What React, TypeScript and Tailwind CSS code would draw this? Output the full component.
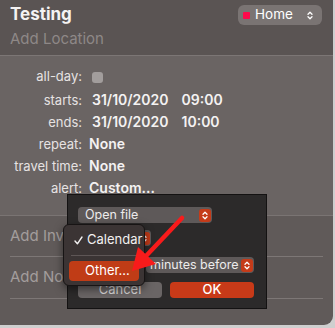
import React from "react";

const ROWS: { label: string; value: React.ReactNode }[] = [
  { label: "starts:", value: <span className="ml-[3px]">31/10/2020<span className="ml-[13px]">09:00</span></span> },
  { label: "ends:", value: <span className="ml-[3px]">31/10/2020<span className="ml-[13px]">10:00</span></span> },
  { label: "repeat:", value: "None" },
  { label: "travel time:", value: "None" },
  { label: "alert:", value: "Custom..." },
];

function Stepper({ red = false }: { red?: boolean }) {
  return (
    <span
      className={`flex h-[13px] w-[12px] items-center justify-center rounded-[3px] ${red ? "bg-[#c53b19]" : ""}`}
    >
      <svg width="6" height="9" viewBox="0 0 6 9" fill="none" stroke="white" strokeWidth="1.3" strokeLinecap="round" strokeLinejoin="round">
        <path d="M1 3.2 L3 1.2 L5 3.2" />
        <path d="M1 5.8 L3 7.8 L5 5.8" />
      </svg>
    </span>
  );
}

export default function App() {
  return (
    <div
      className="h-[328px] w-[335px] overflow-hidden bg-[#cfcfcf]"
      style={{ fontFamily: "Inter, 'Liberation Sans', sans-serif" }}
    >
      <div className="relative h-[325px] w-[333px] overflow-hidden rounded-br-[9px] bg-[#605a59]">
        {/* header */}
        <div className="h-[56px] border-b border-[#7c7675] bg-[#5a5453] pl-[10px] pr-[11px] pt-[3px]">
          <div className="flex items-start justify-between">
            <h1 className="text-[17px] font-bold leading-[22px] text-[#f4f2f2]">Testing</h1>
            <div className="mt-[2px] flex h-[20px] w-[84px] items-center rounded-[6px] bg-[#7a7473] pl-[5px] pr-[6px]">
              <span className="h-[7px] w-[7px] rounded-[1px] bg-[#ff0a4c]" />
              <span className="ml-[5px] text-[13.5px] leading-none text-white">Home</span>
              <span className="ml-auto">
                <Stepper />
              </span>
            </div>
          </div>
          <p className="mt-[5px] text-[15px] leading-[18px] text-[#8e8887]">Add Location</p>
        </div>

        {/* details */}
        <div className="h-[160px] border-b border-[#7a7473] bg-[#6a6463] pt-[10px] text-[#f4f2f2]">
          <div className="flex h-[22px] items-center">
            <span className="w-[82px] shrink-0 text-right text-[13px] text-[#e6e2e2]">all-day:</span>
            <span className="ml-[10px] h-[11px] w-[11px] rounded-[3px] bg-[#a29d9c]" />
          </div>
          {ROWS.map((r) => (
            <div key={r.label} className="h-[22px] whitespace-nowrap leading-[22px]">
              <span className="inline-block w-[82px] text-right text-[13px] text-[#e6e2e2]">{r.label}</span>
              <span className="ml-[7px] inline-block text-[14px] font-semibold">{r.value}</span>
            </div>
          ))}
        </div>

        {/* invitees / notes */}
        <div className="pl-[10px] pr-[10px]">
          <div className="flex h-[41px] items-center border-b border-[#7d7776] text-[15px] text-[#a39d9c]">Add Invitees</div>
          <div className="flex h-[42px] items-center border-b border-[#7d7776] text-[15px] text-[#a39d9c]">Add Notes</div>
        </div>

        {/* alert dialog */}
        <div className="absolute left-[67px] top-[194px] flex h-[115px] w-[200px] flex-col gap-[8px] border border-[#141212] bg-[#2c2a2a] pl-[10px] pr-[12px] pt-[12px] text-[12.5px] text-[#ecebeb]">
          <div className="flex h-[16px] w-[134px] items-center rounded-[4px] bg-[#5e5959] pl-[7px] pr-[1px]">
            <span>Open file</span>
            <span className="ml-auto"><Stepper red /></span>
          </div>
          <div className="mt-[-1px] flex h-[16px] w-[73px] items-center justify-end rounded-[4px] bg-[#5e5959] pr-[1px]">
            <Stepper red />
          </div>
          <div className="mt-[3px] flex h-[16px] items-center gap-[6px]">
            <span className="h-[16px] w-[62px] shrink-0 rounded-[3px] bg-[#4a4646]" />
            <div className="flex h-[16px] flex-1 items-center whitespace-nowrap rounded-[4px] bg-[#5e5959] pl-[4px] pr-[1px]">
              <span className="text-[12.5px]">minutes before</span>
              <span className="ml-auto"><Stepper red /></span>
            </div>
          </div>
          <div className="mt-[1px] flex gap-[8px]">
            <span className="flex h-[16px] w-[84px] items-center justify-center rounded-[4px] bg-[#6a6565] text-[13px] text-[#d8d6d6]">Cancel</span>
            <span className="flex h-[16px] w-[84px] items-center justify-center rounded-[4px] bg-[#c83a18] text-[13px] font-medium text-white">OK</span>
          </div>
        </div>

        {/* popup menu */}
        <div className="absolute left-[63px] top-[224px] w-[82px] rounded-[6px] border border-[#171414] bg-[#3b3434] px-[5px] pb-[4px] pt-[5px] text-[13px] text-[#f2f0f0] shadow-[0_3px_8px_rgba(0,0,0,0.5)]">
          <div className="flex h-[20px] items-center pl-[5px]">
            <svg className="mr-[4px] shrink-0" width="9" height="9" viewBox="0 0 9 9" fill="none" stroke="#f2f0f0" strokeWidth="1.4" strokeLinecap="round" strokeLinejoin="round">
              <path d="M1 5 L3.4 7.8 L8 1" />
            </svg>
            <span>Calendar</span>
          </div>
          <div className="mx-[2px] my-[5px] h-px bg-[#5e5656]" />
          <div className="flex h-[20px] items-center rounded-[4px] bg-[#c03c16] pl-[16px] text-white">Other...</div>
        </div>

        {/* red arrow */}
        <svg className="absolute left-0 top-0" width="333" height="325" viewBox="0 0 333 325">
          <line x1="182" y1="218" x2="146" y2="256" stroke="#f81b1b" strokeWidth="4.5" strokeLinecap="round" />
          <polygon points="132,271 138,247 156,264" fill="#f81b1b" />
        </svg>
      </div>
    </div>
  );
}
